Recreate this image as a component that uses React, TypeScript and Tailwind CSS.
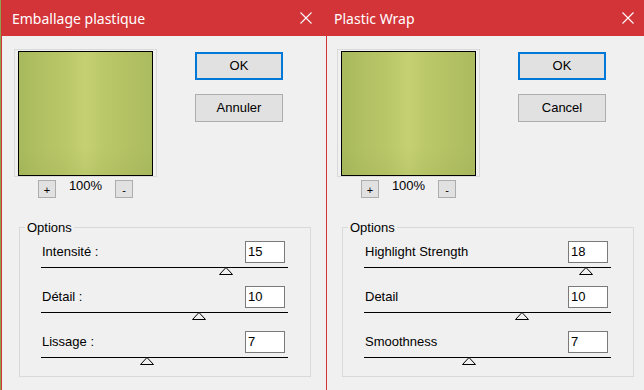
import clsx from 'clsx';

type Row = { label: string; value: string; thumb: number };

const french: Row[] = [
  { label: 'Intensité :', value: '15', thumb: 185 },
  { label: 'Détail :', value: '10', thumb: 158 },
  { label: 'Lissage :', value: '7', thumb: 106 },
];

const english: Row[] = [
  { label: 'Highlight Strength', value: '18', thumb: 222 },
  { label: 'Detail', value: '10', thumb: 158 },
  { label: 'Smoothness', value: '7', thumb: 105 },
];

function Slider({ row }: { row: Row }) {
  return (
    <div className="flex flex-col h-[45px]">
      <div className="flex items-center justify-between pr-[3px]">
        <span className="pl-px">{row.label}</span>
        <div className="w-[40px] h-[22px] border border-[#7a7a7a] bg-white pl-[2px] leading-[20px]">
          {row.value}
        </div>
      </div>
      <div className="relative mt-[4px] h-px bg-black">
        {/* slider thumb */}
        <svg className="absolute top-0" style={{ left: row.thumb - 7 }} width="14" height="8" viewBox="0 0 14 8">
          <path d="M0.5 7.5 L7 0.5 L13.5 7.5 Z" fill="#f0f0f0" stroke="#000" strokeWidth="1" />
        </svg>
      </div>
    </div>
  );
}

function SmallButton({ label }: { label: string }) {
  return (
    <div className="w-[18px] h-[18px] border border-[#adadad] bg-[#e1e1e1] flex items-center justify-center text-[11px] leading-none pt-[2px]">
      {label}
    </div>
  );
}

function Dialog({ title, ok, cancel, rows, first }: { title: string; ok: string; cancel: string; rows: Row[]; first?: boolean }) {
  return (
    <div
      className={clsx(
        'flex flex-col h-[390px] bg-[#f0f0f0] border-l border-[#d33438] overflow-hidden',
        first ? 'w-[325px]' : 'flex-1'
      )}
    >
      {/* title bar */}
      <div
        className={clsx(
          'h-9 shrink-0 bg-[#d33438] flex items-center justify-between text-white',
          first ? 'pl-[10px] pr-[14px]' : 'pl-[7px] pr-[10px]'
        )}
      >
        <span className="font-['Noto_Sans',sans-serif] text-[14px] leading-none pt-px">{title}</span>
        <svg width="12" height="12" viewBox="0 0 12 12">
          <path d="M0.5 0.5 L11.5 11.5 M11.5 0.5 L0.5 11.5" stroke="#fff" strokeWidth="1.1" />
        </svg>
      </div>

      <div className={first ? 'pl-[12px]' : 'pl-[10px]'}>
        <div className="flex items-start mt-[13px]">
          {/* preview */}
          <div className="flex flex-col">
            <div className="w-[143px] border border-[#dadada] px-[3px] pt-px">
              <div className="h-[125px] border border-black bg-[linear-gradient(to_right,#a7b95c_0%,#b2c163_18%,#b9c768_34%,#c5d072_50%,#bcc96a_62%,#b4c264_80%,#abbb5f_100%)]">
                <div className="h-full bg-[linear-gradient(to_bottom,transparent_78%,rgba(150,165,80,0.18)_100%)]" />
              </div>
            </div>
            <div className="flex justify-center gap-[13px] mt-[3px]">
              <SmallButton label="+" />
              <span className="-mt-[2px] leading-[15px]">100%</span>
              <SmallButton label="-" />
            </div>
          </div>

          {/* buttons */}
          <div className="ml-[38px] mt-[3px] flex flex-col gap-[14px]">
            <div className="w-[88px] h-[28px] border-2 border-[#0078d7] bg-[#e1e1e1] flex items-center justify-center">
              {ok}
            </div>
            <div className="w-[88px] h-[28px] border border-[#adadad] bg-[#e1e1e1] flex items-center justify-center">
              {cancel}
            </div>
          </div>
        </div>

        {/* options group */}
        <fieldset className="ml-[5px] mt-[22px] w-[292px] border border-[#d9d9d9]">
          <legend className="ml-[5px] px-[2px] leading-[15px]">Options</legend>
          <div className="pl-[21px] pt-[6px] w-[268px]">
            {rows.map((r) => (
              <Slider key={r.label} row={r} />
            ))}
          </div>
        </fieldset>
      </div>
    </div>
  );
}

export default function App() {
  return (
    <div className="w-[644px] h-[390px] flex bg-[#8fa14f] pl-px font-['Liberation_Sans',Arial,sans-serif] text-[13px] text-black overflow-hidden">
      <Dialog title="Emballage plastique" ok="OK" cancel="Annuler" rows={french} first />
      <Dialog title="Plastic Wrap" ok="OK" cancel="Cancel" rows={english} />
    </div>
  );
}
